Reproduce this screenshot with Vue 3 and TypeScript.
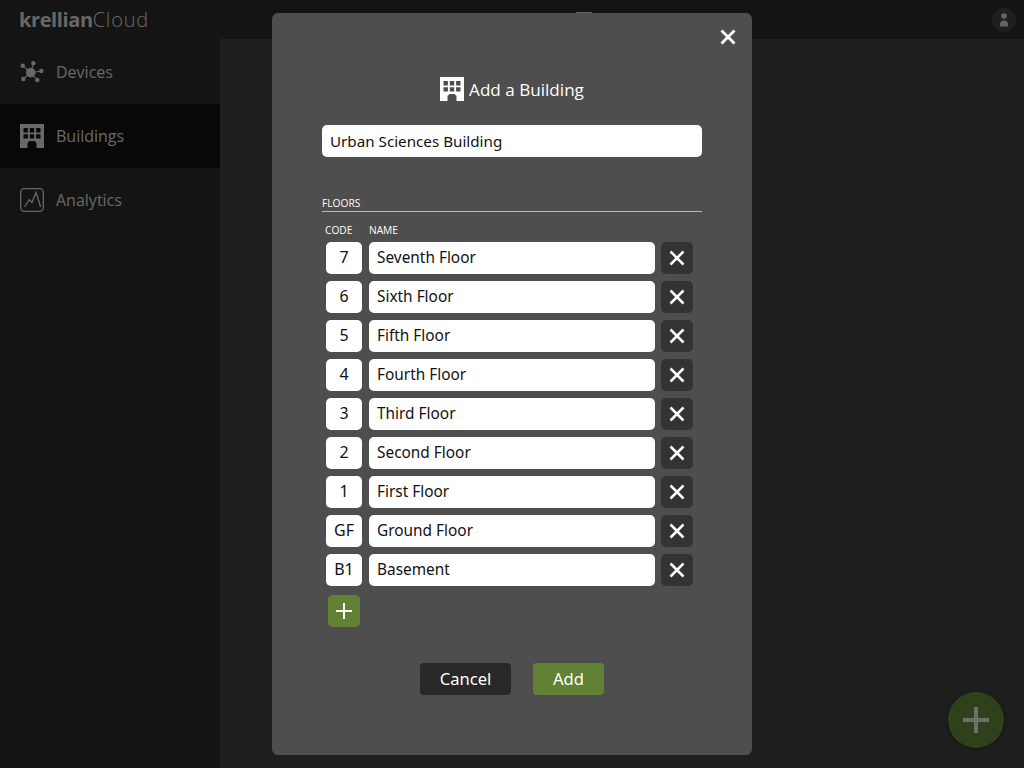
<script setup lang="ts">
interface Floor {
  code: string;
  name: string;
}

const floors: Floor[] = [
  { code: "7", name: "Seventh Floor" },
  { code: "6", name: "Sixth Floor" },
  { code: "5", name: "Fifth Floor" },
  { code: "4", name: "Fourth Floor" },
  { code: "3", name: "Third Floor" },
  { code: "2", name: "Second Floor" },
  { code: "1", name: "First Floor" },
  { code: "GF", name: "Ground Floor" },
  { code: "B1", name: "Basement" },
];

const buildingPath =
  "M0 0H24V24H16.500V19L14.500 17H9.500L7.500 19V24H0ZM3.500 4V8.400H7.900V4ZM9.800 4V8.400H14.200V4ZM16.100 4V8.400H20.500V4ZM3.500 10.200V14.600H7.900V10.200ZM9.800 10.200V14.600H14.200V10.200ZM16.100 10.200V14.600H20.500V10.200Z";
</script>

<template>
  <div class="app">
    <header class="topbar">
      <div class="logo"><b>krellian</b>Cloud</div>
      <span class="top-icon"></span>
      <span class="avatar">
        <svg width="8" height="14" viewBox="0 0 8 14">
          <circle cx="4" cy="3" r="2.800" fill="#c8c8c8" />
          <path d="M0 13.500C-0.500 9.500 1 7.500 4 7.500S8.500 9.500 8 13.500Z" fill="#c8c8c8" />
        </svg>
      </span>
    </header>
    <div class="body">
      <nav class="sidebar">
        <a class="nav-item">
          <svg class="nav-icon" viewBox="0 0 24 24" fill="currentColor" stroke="currentColor">
            <path
              stroke-width="1.100"
              d="M10.700 12.700L2.700 5.700M10.700 12.700L13.300 3.300M10.700 12.700L21.300 11M10.700 12.700L17.300 20M10.700 12.700L3.300 19"
            />
            <circle cx="10.700" cy="12.700" r="4.800" stroke="none" />
            <circle cx="2.700" cy="5.700" r="2.200" stroke="none" />
            <circle cx="13.300" cy="3.300" r="2.200" stroke="none" />
            <circle cx="21.300" cy="11" r="2.200" stroke="none" />
            <circle cx="17.300" cy="20" r="2.200" stroke="none" />
            <circle cx="3.300" cy="19" r="2.200" stroke="none" />
          </svg>
          Devices
        </a>
        <a class="nav-item active">
          <svg class="nav-icon" viewBox="0 0 24 24" fill="currentColor">
            <path :d="buildingPath" fill-rule="evenodd" />
          </svg>
          Buildings
        </a>
        <a class="nav-item">
          <svg class="nav-icon" viewBox="0 0 24 24" fill="none" stroke="currentColor" stroke-width="1.300">
            <rect x="0.650" y="0.650" width="22.700" height="22.700" rx="4" />
            <path d="M4.700 19L9.300 11.500L12 14.500L16 4.500L20.700 19" />
          </svg>
          Analytics
        </a>
      </nav>
      <main class="content"></main>
    </div>
    <button class="fab">
      <svg width="26" height="26" viewBox="0 0 26 26" fill="#dcdcdc">
        <path d="M11 0H15V11H26V15H15V26H11V15H0V11H11Z" />
      </svg>
    </button>

    <div class="scrim">
      <section class="modal">
        <button class="close">
          <svg width="16" height="16" viewBox="0 0 16 16">
            <path d="M1.500 1.500L14.500 14.500M14.500 1.500L1.500 14.500" stroke="#fff" stroke-width="2.800" />
          </svg>
        </button>
        <h1 class="title">
          <svg width="24" height="24" viewBox="0 0 24 24" fill="#fff">
            <path :d="buildingPath" fill-rule="evenodd" />
          </svg>
          Add a Building
        </h1>
        <input class="field building-name" value="Urban Sciences Building" />
        <div class="section-label">FLOORS</div>
        <div class="col-heads">
          <span class="head-code">CODE</span>
          <span>NAME</span>
        </div>
        <div class="rows">
          <div v-for="floor in floors" :key="floor.code" class="row">
            <input class="field code" :value="floor.code" />
            <input class="field name" :value="floor.name" />
            <button class="remove">
              <svg width="16" height="16" viewBox="0 0 16 16">
                <path d="M1.500 1.500L14.500 14.500M14.500 1.500L1.500 14.500" stroke="#fff" stroke-width="2.500" />
              </svg>
            </button>
          </div>
        </div>
        <button class="add-floor">
          <svg width="16" height="16" viewBox="0 0 16 16" fill="#fff">
            <path d="M7 0H9V7H16V9H9V16H7V9H0V7H7Z" />
          </svg>
        </button>
        <div class="actions">
          <button class="btn cancel">Cancel</button>
          <button class="btn submit">Add</button>
        </div>
      </section>
    </div>
  </div>
</template>

<style scoped>
.app {
  position: relative;
  display: flex;
  flex-direction: column;
  height: 768px;
  overflow: hidden;
  background: #282828;
  font-family: "Open Sans", sans-serif;
}

.topbar {
  display: flex;
  align-items: center;
  height: 39px;
  flex: none;
  padding: 0 8px 0 19px;
}

.logo {
  width: 129px;
  font-size: 20px;
  font-weight: 300;
  line-height: 39px;
  letter-spacing: 0.8px;
  white-space: nowrap;
  color: #cfcfcf;
}

.logo b {
  font-weight: 700;
  letter-spacing: -0.4px;
}

.top-icon {
  width: 16px;
  height: 16px;
  margin-left: 428px;
  background: #ccc;
}

.avatar {
  display: flex;
  align-items: center;
  justify-content: center;
  width: 24px;
  height: 24px;
  margin-left: auto;
  border-radius: 50%;
  background: #3e3e3e;
}

.body {
  display: flex;
  flex: 1;
}

.sidebar {
  width: 220px;
  padding-top: 1px;
}

.nav-item {
  display: flex;
  align-items: center;
  gap: 12px;
  height: 64px;
  padding-left: 20px;
  font-size: 16px;
  color: #d0d0d0;
}

.nav-item.active {
  background: #101010;
}

.nav-icon {
  width: 24px;
  height: 24px;
}

.content {
  flex: 1;
  background: #3e3e3e;
}

.fab {
  position: absolute;
  right: 20px;
  bottom: 20px;
  display: flex;
  align-items: center;
  justify-content: center;
  width: 56px;
  height: 56px;
  padding: 0;
  border: 0;
  border-radius: 50%;
  background: #5f8334;
  box-shadow: 0 1px 4px rgba(0, 0, 0, 0.5);
}

.scrim {
  position: absolute;
  inset: 0;
  display: flex;
  align-items: center;
  justify-content: center;
  background: rgba(0, 0, 0, 0.5);
}

.modal {
  position: relative;
  box-sizing: border-box;
  width: 480px;
  height: 742px;
  padding: 64px 50px 0;
  border-radius: 6px;
  background: #4e4e4e;
  color: #fff;
}

.close {
  position: absolute;
  top: 16px;
  right: 16px;
  display: flex;
  padding: 0;
  border: 0;
  background: none;
}

.title {
  display: flex;
  align-items: center;
  justify-content: center;
  gap: 5px;
  height: 24px;
  margin: 0;
  font-size: 17.100px;
  font-weight: 400;
  color: #fff;
}

.field {
  box-sizing: border-box;
  height: 32px;
  padding: 0 8px 2px;
  border: 0;
  border-radius: 5px;
  outline: 0;
  background: #fff;
  color: #111;
  font-family: "Noto Sans", sans-serif;
  font-size: 15.400px;
}

.building-name {
  display: block;
  width: 380px;
  margin-top: 24px;
  padding: 0 8px 1px;
  font-size: 15.200px;
}

.section-label {
  margin-top: 40px;
  padding-bottom: 1px;
  border-bottom: 1px solid #bbb;
  font-size: 10.200px;
  line-height: 13px;
}

.col-heads {
  display: flex;
  margin-top: 12px;
  padding-left: 3px;
  font-size: 10.200px;
  line-height: 13px;
}

.head-code {
  width: 44px;
}

.rows {
  display: flex;
  flex-direction: column;
  gap: 7px;
  margin-top: 5px;
  padding-left: 4px;
}

.row {
  display: flex;
  align-items: center;
}

.code {
  width: 36px;
  padding: 0 0 2px;
  font-size: 16px;
  text-align: center;
}

.name {
  width: 286px;
  margin-left: 7px;
}

.remove {
  display: flex;
  align-items: center;
  justify-content: center;
  width: 32px;
  height: 32px;
  margin-left: 6px;
  padding: 0;
  border: 0;
  border-radius: 5px;
  background: #333;
}

.add-floor {
  display: flex;
  align-items: center;
  justify-content: center;
  width: 32px;
  height: 32px;
  margin: 9px 0 0 6px;
  padding: 0;
  border: 0;
  border-radius: 5px;
  background: #618134;
}

.actions {
  display: flex;
  justify-content: center;
  gap: 22px;
  margin-top: 36px;
}

.btn {
  height: 32px;
  padding: 0 0 2px;
  border: 0;
  border-radius: 4px;
  color: #fff;
  font-family: "Noto Sans", sans-serif;
  font-size: 16.600px;
}

.cancel {
  width: 91px;
  background: #282828;
}

.submit {
  width: 71px;
  background: #618134;
}
</style>
